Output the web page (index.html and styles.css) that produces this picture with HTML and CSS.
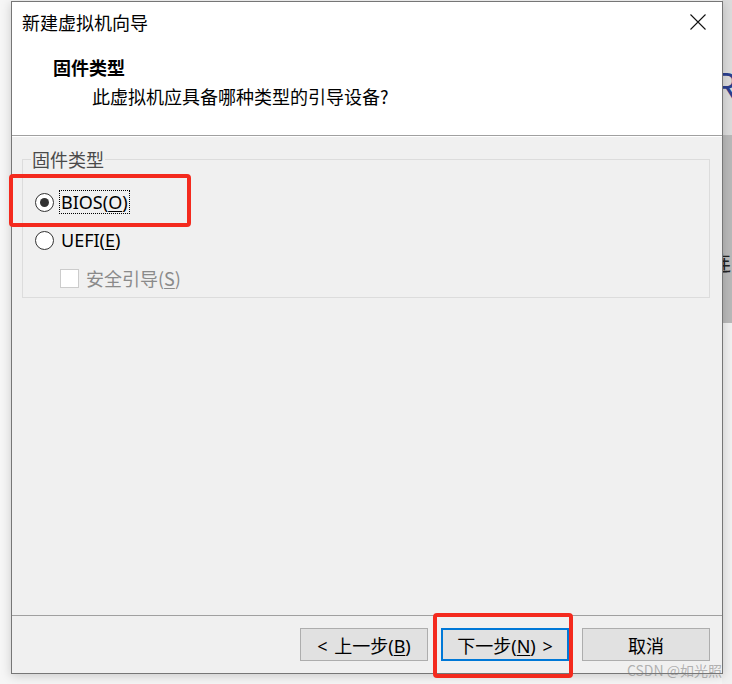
FILE: index.html
```html
<!DOCTYPE html>
<html lang="zh-CN">
<head>
<meta charset="utf-8">
<title>新建虚拟机向导</title>
<link rel="stylesheet" href="styles.css">
</head>
<body>
<div class="backdrop">
  <span class="peek peek-r">R</span>
  <span class="peek peek-lian">连</span>
</div>
<div class="window">
  <div class="top">
    <div class="titlebar">
      <span class="title">新建虚拟机向导</span>
      <svg class="close" width="16" height="16" viewBox="0 0 16 16"><path d="M0.5 0.5 L15.5 15.5 M15.5 0.5 L0.5 15.5" stroke="#111" stroke-width="1.1" fill="none"/></svg>
    </div>
    <div class="header">
      <div class="h-title">固件类型</div>
      <div class="h-sub">此虚拟机应具备哪种类型的引导设备?</div>
    </div>
  </div>
  <div class="middle">
    <fieldset class="group">
      <legend>固件类型</legend>
      <div class="row">
        <span class="radio checked"><span class="dot"></span></span>
        <span class="label focus">BIOS(<u>O</u>)</span>
      </div>
      <div class="row">
        <span class="radio"></span>
        <span class="label">UEFI(<u>E</u>)</span>
      </div>
      <div class="row sub">
        <span class="check"></span>
        <span class="label disabled">安全引导(<u>S</u>)</span>
      </div>
    </fieldset>
  </div>
  <div class="footer">
    <button class="btn">&lt; 上一步(<u>B</u>)</button>
    <button class="btn primary">下一步(<u>N</u>) &gt;</button>
    <button class="btn">取消</button>
  </div>
  <div class="mark mark-bios"></div>
  <div class="mark mark-next"></div>
</div>
<div class="watermark">CSDN @如光照</div>
</body>
</html>
```
FILE: styles.css
```css
html, body {
  margin: 0;
  padding: 0;
}
body {
  width: 732px;
  height: 684px;
  overflow: hidden;
  position: relative;
  background: #f6f6f6;
  font-family: "Noto Sans", "Noto Sans CJK SC", sans-serif;
  font-size: 18px;
  color: #000;
  padding: 1px 0 0 11px;
  box-sizing: border-box;
}
.backdrop {
  position: absolute;
  left: 722px;
  top: 0;
  width: 10px;
  height: 684px;
  overflow: hidden;
  background: linear-gradient(to bottom, #dcdcdc 0, #dcdcdc 135px, #b9b9b9 135px, #b9b9b9 323px, #f1f1f1 323px);
}
.peek {
  position: absolute;
  font-family: "Noto Sans CJK SC", sans-serif;
}
.peek-r {
  left: -10px;
  top: 66px;
  font-size: 36px;
  color: #2b3f8f;
  font-family: "Liberation Sans", sans-serif;
}
.peek-lian {
  left: -11px;
  top: 248px;
  font-size: 20px;
  color: #222;
}
.window {
  position: relative;
  width: 712px;
  height: 673px;
  border: 1px solid #767676;
  box-sizing: border-box;
  background: #f0f0f0;
  display: flex;
  flex-direction: column;
  box-shadow: 0 2px 10px rgba(0,0,0,0.18);
}
.top {
  background: #fff;
  height: 133px;
  border-bottom: 1px solid #a0a0a0;
  flex: none;
}
.titlebar {
  height: 40px;
  display: flex;
  align-items: center;
  justify-content: space-between;
  padding: 0 16px 0 10px;
}
.title {
  font-size: 18px;
  font-family: "Noto Sans CJK SC", sans-serif;
}
.close {
  display: block;
}
.header {
  padding-left: 41px;
  font-family: "Noto Sans CJK SC", sans-serif;
}
.h-title {
  font-weight: bold;
  font-size: 18px;
  line-height: 26px;
  margin-top: 12px;
}
.h-sub {
  font-size: 18px;
  line-height: 26px;
  margin-top: 3px;
  padding-left: 39px;
}
.middle {
  flex: 1;
  border-top: 1px solid #fff;
  padding: 10px 12px 0 10px;
}
.group {
  margin: 0;
  border: 1px solid #dcdcdc;
  padding: 0 0 0 12px;
  height: 151px;
  box-sizing: border-box;
}
.group legend {
  font-family: "Noto Sans CJK SC", sans-serif;
  color: #4a4a4a;
  font-size: 18px;
  line-height: 24px;
  padding: 0 1px;
  margin-left: -4px;
}
.row {
  height: 38px;
  display: flex;
  align-items: center;
  gap: 6px;
}
.row:first-of-type {
  margin-top: 12px;
}
.row.sub {
  padding-left: 25px;
}
.radio {
  width: 19px;
  height: 19px;
  box-sizing: border-box;
  border: 1px solid #333;
  border-radius: 50%;
  background: #fff;
  display: flex;
  align-items: center;
  justify-content: center;
  flex: none;
}
.dot {
  width: 9px;
  height: 9px;
  border-radius: 50%;
  background: #333;
}
.check {
  width: 19px;
  height: 19px;
  box-sizing: border-box;
  border: 1px solid #cccccc;
  background: #fff;
  flex: none;
}
.label {
  line-height: 22px;
  padding: 0 1px;
  font-family: "Noto Sans", "Noto Sans CJK SC", sans-serif;
}
.label.focus {
  outline: 1px dotted #000;
  outline-offset: 0;
}
.label.disabled {
  color: #8a8a8a;
  font-family: "Noto Sans CJK SC", sans-serif;
}
.label u, .btn u {
  text-underline-offset: 2px;
}
.footer {
  flex: none;
  height: 58px;
  border-top: 1px solid #a0a0a0;
  box-sizing: border-box;
  display: flex;
  justify-content: flex-end;
  align-items: center;
  gap: 13px;
  padding: 0 12px 0 0;
}
.btn {
  width: 128px;
  height: 33px;
  box-sizing: border-box;
  background: #e1e1e1;
  border: 1px solid #adadad;
  font-family: "Noto Sans", "Noto Sans CJK SC", sans-serif;
  font-size: 18px;
  color: #000;
  padding: 0;
  border-radius: 0;
  word-spacing: 2px;
}
.btn.primary {
  border: 2px solid #0078d7;
}
.mark {
  position: absolute;
  border: 4px solid #f42a1e;
  border-radius: 4px;
  box-sizing: border-box;
}
.mark-bios {
  left: -3px;
  top: 172px;
  width: 182px;
  height: 53px;
}
.mark-next {
  left: 421px;
  top: 611px;
  width: 140px;
  height: 65px;
}
.watermark {
  position: absolute;
  right: 10px;
  bottom: 4px;
  font-family: "Noto Sans CJK SC", sans-serif;
  font-size: 14px;
  color: rgba(120,120,120,0.55);
}
```
